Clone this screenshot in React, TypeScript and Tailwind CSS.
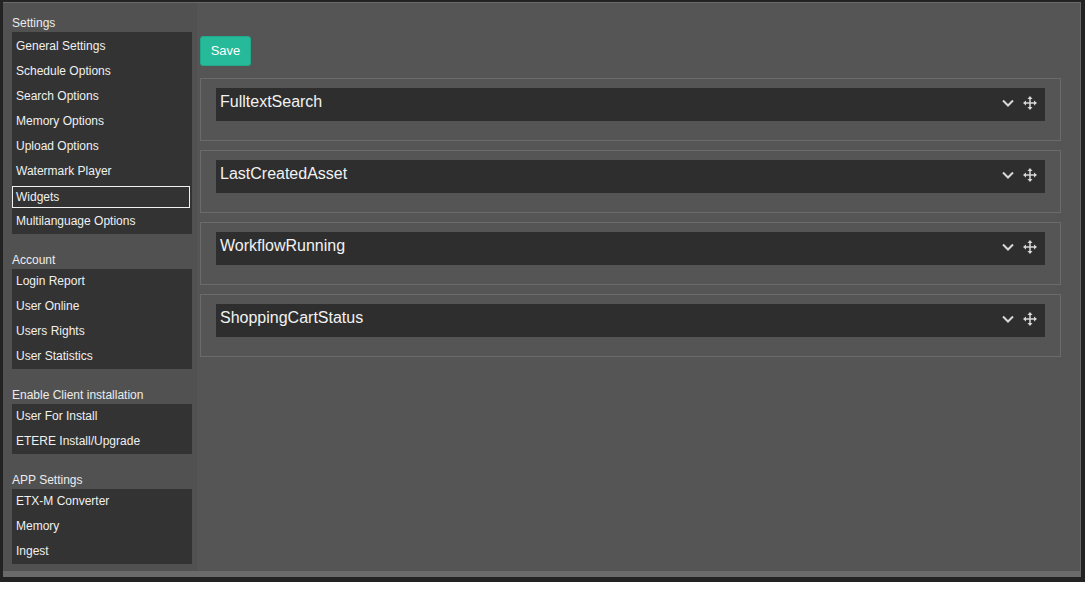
import React from "react";

type Group = { title: string; items: string[]; padTop?: boolean };

const groups: Group[] = [
  {
    title: "Settings",
    padTop: true,
    items: [
      "General Settings",
      "Schedule Options",
      "Search Options",
      "Memory Options",
      "Upload Options",
      "Watermark Player",
      "Widgets",
      "Multilanguage Options",
    ],
  },
  { title: "Account", items: ["Login Report", "User Online", "Users Rights", "User Statistics"] },
  { title: "Enable Client installation", items: ["User For Install", "ETERE Install/Upgrade"] },
  { title: "APP Settings", items: ["ETX-M Converter", "Memory", "Ingest"] },
];

const widgets = ["FulltextSearch", "LastCreatedAsset", "WorkflowRunning", "ShoppingCartStatus"];

function Chevron() {
  return (
    <svg width="12" height="8" viewBox="0 0 12 8" className="block">
      <polyline points="1,1.5 6,6.5 11,1.5" fill="none" stroke="#d8d8d8" strokeWidth="2" />
    </svg>
  );
}

function MoveIcon() {
  return (
    <svg width="14" height="14" viewBox="0 0 14 14" className="block">
      <line x1="7" y1="2" x2="7" y2="12" stroke="#d8d8d8" strokeWidth="1.5" />
      <line x1="2" y1="7" x2="12" y2="7" stroke="#d8d8d8" strokeWidth="1.5" />
      <polygon points="7,0 4.5,3 9.5,3" fill="#d8d8d8" />
      <polygon points="7,14 4.5,11 9.5,11" fill="#d8d8d8" />
      <polygon points="0,7 3,4.5 3,9.5" fill="#d8d8d8" />
      <polygon points="14,7 11,4.5 11,9.5" fill="#d8d8d8" />
    </svg>
  );
}

export default function App() {
  return (
    <div className="w-[1085px] h-[589px] bg-white" style={{ fontFamily: '"Liberation Sans", Arial, sans-serif' }}>
      <div className="w-[1085px] h-[582px] bg-[#232323] pt-[2px] pl-[3px] pr-[4px] pb-[5px] flex flex-col">
        <div className="flex-1 flex min-h-0 border-t border-r border-[#6a6a6a] bg-[#555555]">
          {/* Sidebar */}
          <div className="w-[194px] bg-[#515151] pl-[9px] pr-[5px] pt-[13px] flex flex-col">
            {groups.map((g, gi) => (
              <div key={g.title} className={gi > 0 ? "mt-[19px]" : ""}>
                <div className="text-[12px] leading-[14px] text-[#ececec] mb-[2px]">{g.title}</div>
                <div className={`w-[180px] bg-[#333333] ${g.padTop ? "pt-[2px]" : ""}`}>
                  {g.items.map((item) =>
                    item === "Widgets" ? (
                      <div key={item} className="h-[25px] pt-[2px] pr-[2px] pb-[1px]">
                        <div className="h-[22px] border border-[#f0f0f0] flex items-center pl-[3px] pb-[1px] text-[12px] text-[#f0f0f0]">
                          {item}
                        </div>
                      </div>
                    ) : (
                      <div key={item} className="h-[25px] flex items-center pl-[4px] pb-[2px] text-[12px] text-[#f0f0f0]">
                        {item}
                      </div>
                    )
                  )}
                </div>
              </div>
            ))}
          </div>

          {/* Main */}
          <div className="flex-1 pl-[3px] pr-[19px] pt-[33px]">
            <button className="w-[51px] h-[30px] bg-[#26b99a] border border-[#20a98b] rounded-[3px] text-[13px] text-white flex items-center justify-center">
              Save
            </button>
            <div className="mt-[12px] flex flex-col gap-[9px]">
              {widgets.map((w) => (
                <div key={w} className="h-[63px] border border-[#6b6b6b] pt-[9px] px-[15px]">
                  <div className="h-[33px] bg-[#2e2e2e] flex items-start pl-[4px] pr-[8px]">
                    <div className="flex-1 text-[16px] leading-[20px] pt-[4px] text-[#f2f2f2]">{w}</div>
                    <div className="flex items-center gap-[9px] h-[30px]">
                      <Chevron />
                      <MoveIcon />
                    </div>
                  </div>
                </div>
              ))}
            </div>
          </div>
        </div>
        <div className="h-[6px] bg-[#6a6a6a]" />
      </div>
    </div>
  );
}
